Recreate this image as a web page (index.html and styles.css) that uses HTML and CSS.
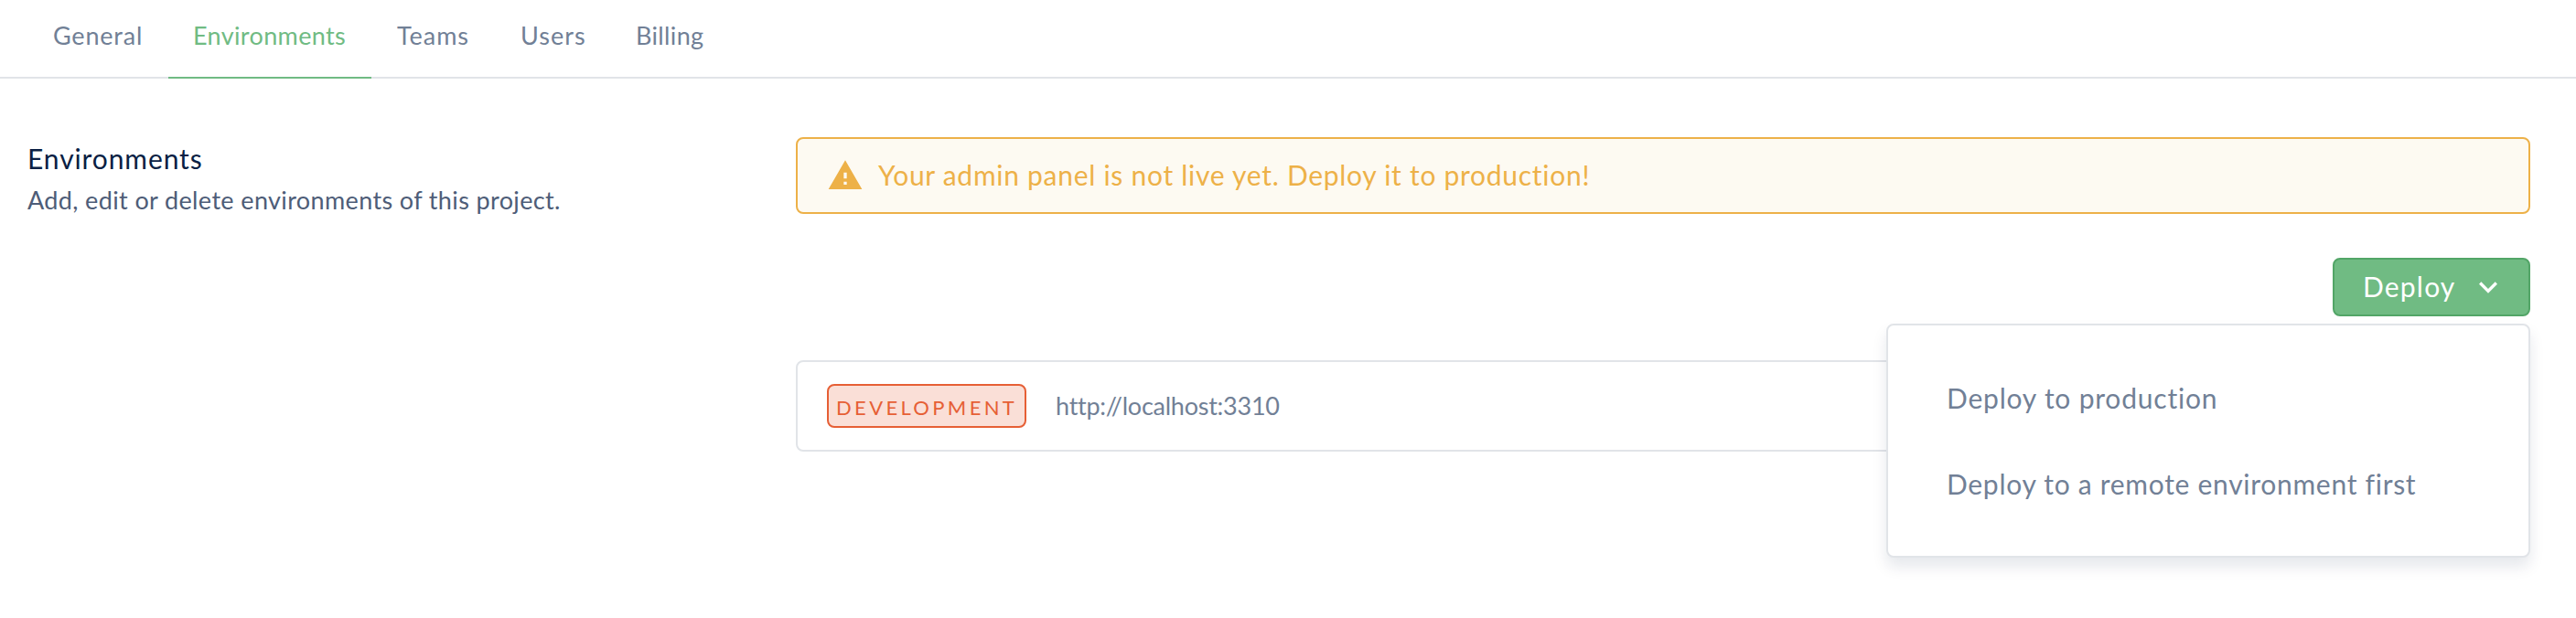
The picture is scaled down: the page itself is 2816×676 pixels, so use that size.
FILE: index.html
```html
<!DOCTYPE html>
<html lang="en">
<head>
  <meta charset="utf-8">
  <title>Project settings – Environments</title>
  <link rel="stylesheet" href="styles.css">
</head>
<body>
  <nav class="tabs">
    <a class="tab tab-general">General</a>
    <a class="tab tab-environments active">Environments</a>
    <a class="tab tab-teams">Teams</a>
    <a class="tab tab-users">Users</a>
    <a class="tab tab-billing">Billing</a>
  </nav>
  <main class="layout">
    <header class="intro">
      <h1 class="title">Environments</h1>
      <p class="description">Add, edit or delete environments of this project.</p>
    </header>
    <section class="content">
      <div class="alert">
        <svg class="alert-icon" viewBox="0 0 24 24"><path fill="currentColor" d="M1 21h22L12 2 1 21zm12-3h-2v-2h2v2zm0-4h-2v-4h2v4z"/></svg>
        <span class="alert-text">Your admin panel is not live yet. Deploy it to production!</span>
      </div>
      <div class="actions">
        <button class="deploy">
          <span class="deploy-label">Deploy</span>
          <svg class="chevron" viewBox="0 0 24 24"><path fill="currentColor" d="M16.59 8.59L12 13.17 7.41 8.59 6 10l6 6 6-6z"/></svg>
        </button>
        <div class="menu">
          <a class="menu-item">Deploy to production</a>
          <a class="menu-item menu-item-remote">Deploy to a remote environment first</a>
        </div>
      </div>
      <div class="environment">
        <span class="badge">DEVELOPMENT</span>
        <span class="url">http://localhost:3310</span>
      </div>
    </section>
  </main>
</body>
</html>
```
FILE: styles.css
```css
* { box-sizing: border-box; }

body {
  margin: 0;
  min-height: 676px;
  background: #fff;
  color: #718096;
  font-family: Lato, "Liberation Sans", sans-serif;
}

.tabs {
  display: flex;
  height: 86px;
  padding-left: 30px;
  box-shadow: inset 0 -2px #e1e4e8;
}

.tab {
  padding: 23px 0 0 28px;
  font-size: 27px;
  line-height: 32px;
}

.tab-general { width: 154px; letter-spacing: 0.8px; }
.tab-environments { width: 222px; padding-left: 27px; letter-spacing: 0.36px; }
.tab-teams { width: 135px; letter-spacing: 0.95px; }
.tab-users { width: 126px; letter-spacing: 1px; }
.tab-billing { letter-spacing: 0.35px; }

.tab.active {
  color: #70bb83;
  border-bottom: 2px solid #70bb83;
}

.layout {
  display: grid;
  grid-template-columns: 840px 1896px;
  padding: 64px 50px 0 30px;
}

.intro { padding-top: 5px; }

.title {
  margin: 0 0 12px;
  color: #0a1f44;
  font-size: 30px;
  font-weight: 400;
  line-height: 36px;
  letter-spacing: 0.9px;
}

.description {
  margin: 0;
  color: #4e5d78;
  font-size: 27px;
  line-height: 32px;
  letter-spacing: 0.37px;
}

.alert {
  display: flex;
  align-items: center;
  gap: 16px;
  height: 84px;
  padding-left: 32px;
  border: 2px solid #edb148;
  border-radius: 8px;
  background: #fdfaf2;
  color: #edb148;
}

.alert-icon { width: 40px; height: 40px; }

.alert-text {
  padding-bottom: 3px;
  font-size: 30px;
  line-height: 36px;
  letter-spacing: 0.72px;
}

.actions {
  position: relative;
  display: flex;
  justify-content: flex-end;
  margin: 48px 0;
}

.deploy {
  display: flex;
  align-items: center;
  gap: 15px;
  width: 216px;
  height: 64px;
  padding: 0 0 0 31px;
  border: 2px solid #52a567;
  border-radius: 8px;
  background: #70bb83;
  color: #fff;
  font: 400 30px/36px Lato, "Liberation Sans", sans-serif;
}

.deploy-label {
  padding-bottom: 3px;
  letter-spacing: 1.2px;
}

.chevron { width: 40px; height: 40px; }

.menu {
  position: absolute;
  top: 72px;
  right: 0;
  display: flex;
  flex-direction: column;
  gap: 58px;
  width: 704px;
  height: 256px;
  padding: 61px 0 0 64px;
  border: 2px solid #e1e4e8;
  border-radius: 8px;
  background: #fff;
  box-shadow: 0 10px 16px rgba(10, 31, 68, 0.1);
}

.menu-item {
  font-size: 30px;
  line-height: 36px;
  letter-spacing: 0.8px;
}

.menu-item-remote { letter-spacing: 0.71px; }

.environment {
  display: flex;
  align-items: center;
  height: 100px;
  padding-left: 32px;
  border: 2px solid #e1e4e8;
  border-radius: 8px;
}

.badge {
  width: 218px;
  height: 48px;
  padding-left: 8px;
  border: 2px solid #e65f35;
  border-radius: 8px;
  background: #fadfd7;
  color: #e65f35;
  font-size: 22px;
  line-height: 47px;
  letter-spacing: 3.35px;
}

.url {
  padding: 0 0 0 32px;
  font-size: 27px;
  line-height: 32px;
  letter-spacing: -0.25px;
}
```
